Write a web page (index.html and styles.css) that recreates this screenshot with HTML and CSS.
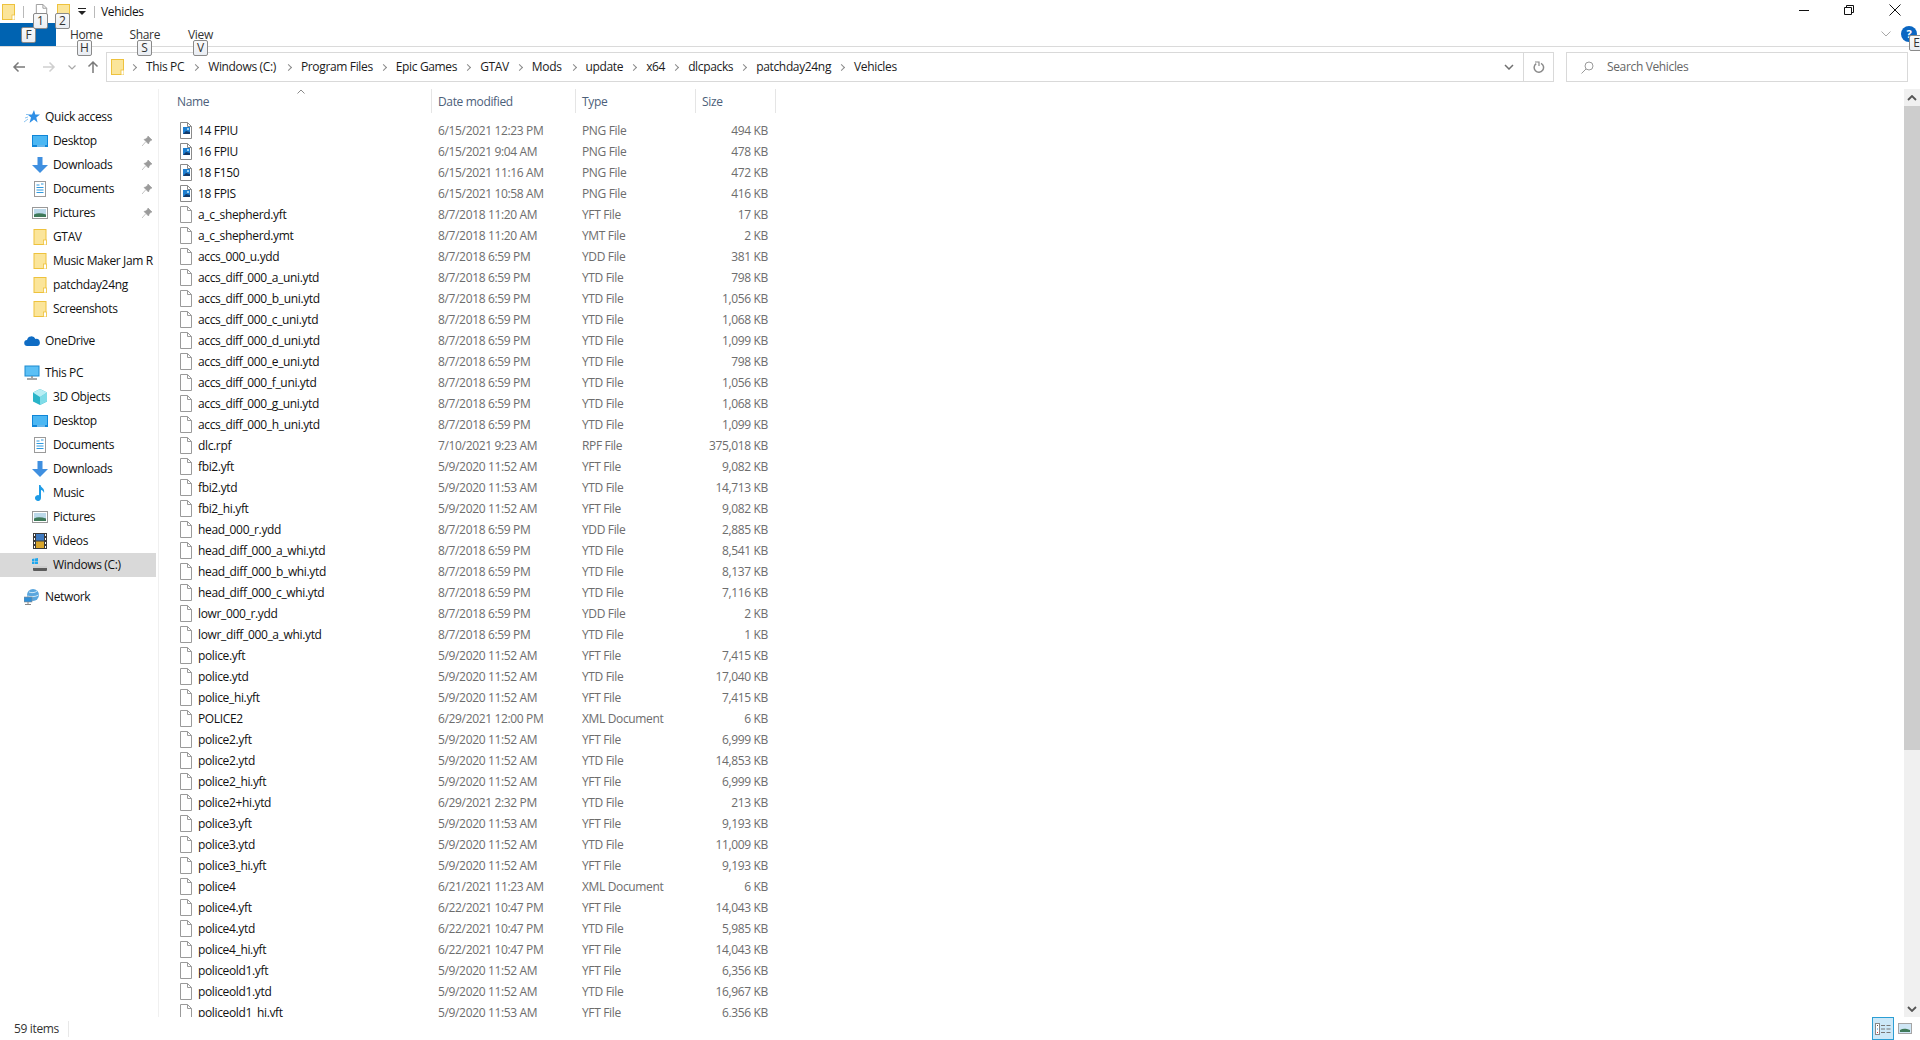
FILE: index.html
```html
<!DOCTYPE html>
<html lang="en">
<head>
<meta charset="utf-8">
<title>Vehicles</title>
<link rel="stylesheet" href="styles.css">
</head>
<body>
<svg class="defs" xmlns="http://www.w3.org/2000/svg">
  <symbol id="doc" viewBox="0 0 12 17"><path d="M.5.5h7l4 4v12H.5z" fill="#fff" stroke="#9a9a9a"/><path d="M7.500.5v4h4" fill="none" stroke="#9a9a9a"/></symbol>
  <symbol id="img" viewBox="0 0 12 17"><path d="M.5.5h7l4 4v12H.5z" fill="#fff" stroke="#8a8a8a"/><path d="M7.500.5v4h4" fill="none" stroke="#8a8a8a"/><rect x="3" y="5" width="7" height="7" fill="#1f7fd0"/><path d="M3 12l3-3 4 1v2z" fill="#123a6b"/><rect x="7" y="6" width="2" height="2" fill="#9ed4f5"/></symbol>
  <symbol id="folder" viewBox="0 0 13 16"><rect x=".5" y=".5" width="12" height="15" fill="#fbe59a" stroke="#eec23d"/><rect x="10" y="11" width="3" height="5" fill="#fff" stroke="#eec23d" stroke-width=".8"/></symbol>
  <symbol id="desktop" viewBox="0 0 16 12"><rect width="16" height="12" fill="#0f86d8"/><rect x="1" y="1" width="14" height="9" fill="#4cb7f3"/><rect x="5" y="10.5" width="8" height="1" fill="#bfe6fb"/></symbol>
  <symbol id="down" viewBox="0 0 16 16"><path d="M5.5 0h5v8H16l-8 8-8-8h5.500z" fill="#3f8fe0"/></symbol>
  <symbol id="docs" viewBox="0 0 12 16"><rect x=".5" y=".5" width="11" height="15" fill="#fff" stroke="#9a9a9a"/><path d="M2.500 4h3M7 3h2.500M2.500 6.500h7M2.500 9h7M2.500 11.500h7" stroke="#2f9ae0"/></symbol>
  <symbol id="pics" viewBox="0 0 16 12"><rect x=".5" y=".5" width="15" height="11" fill="#fff" stroke="#999"/><rect x="2" y="2" width="12" height="8" fill="#bcd9ea"/><path d="M2 7.500c4-2 8-1 12 0V10H2z" fill="#3f7a5a"/></symbol>
  <symbol id="pin" viewBox="0 0 10 10"><path d="M6 0l4 4-1.500.5L7 6.500 6.500 8 2 3.500 3.500 3 5.500 1.500zM3.500 6L0 10" fill="#9b9b9b" stroke="#9b9b9b" stroke-width=".6"/></symbol>
</svg>

<div class="window">
  <header class="titlebar">
    <svg class="ico16 t-folder"><use href="#folder"/></svg>
    <i class="t-sep"></i>
    <svg class="ico16 t-doc"><use href="#doc"/></svg>
    <svg class="ico16 t-fold2"><use href="#folder"/></svg>
    <svg class="t-drop" viewBox="0 0 8 7" width="8" height="7"><path d="M0 0h8v1H0zM0 3h8L4 7z" fill="#222"/></svg>
    <i class="t-sep t-sep2"></i>
    <span class="t-title">Vehicles</span>
    <div class="winbtns">
      <svg viewBox="0 0 10 10" width="10" height="10"><path d="M0 5.500h10" stroke="#111"/></svg>
      <svg viewBox="0 0 10 10" width="10" height="10"><path d="M.5 2.500h7v7h-7zM2.500 2.500v-2h7v7h-2" fill="none" stroke="#111"/></svg>
      <svg viewBox="0 0 12 12" width="12" height="12"><path d="M.5.500l11 11M11.500.500l-11 11" stroke="#111"/></svg>
    </div>
  </header>

  <nav class="tabs">
    <span class="tab-file"></span>
    <span class="tab tab-home">Home</span>
    <span class="tab tab-share">Share</span>
    <span class="tab tab-view">View</span>
    <div class="tab-right">
      <svg viewBox="0 0 10 6" width="10" height="6"><path d="M.5.500L5 5 9.500.500" fill="none" stroke="#a8a8a8"/></svg>
      <span class="help">?</span>
    </div>
  </nav>

  <div class="navbar">
    <div class="navbtns">
      <svg viewBox="0 0 14 12" width="14" height="12"><path d="M13 6H2M6.500 1.500L2 6l4.500 4.500" fill="none" stroke="#7a7a7a" stroke-width="1.500"/></svg>
      <svg viewBox="0 0 14 12" width="14" height="12"><path d="M1 6h11M7.500 1.500L12 6l-4.500 4.500" fill="none" stroke="#cfcfcf" stroke-width="1.500"/></svg>
      <svg viewBox="0 0 8 5" width="8" height="5"><path d="M.5.500L4 4 7.500.500" fill="none" stroke="#a8a8a8" stroke-width="1.200"/></svg>
      <svg viewBox="0 0 12 14" width="12" height="14"><path d="M6 13V2M1.500 6.500L6 2l4.500 4.500" fill="none" stroke="#7a7a7a" stroke-width="1.500"/></svg>
    </div>
    <div class="address">
      <svg class="ico16 a-folder"><use href="#folder"/></svg>
      <span class="crumb crumb-a">This PC</span>
      <span class="crumb crumb-b">Windows (C:)</span>
      <span class="crumb">Program Files</span>
      <span class="crumb">Epic Games</span>
      <span class="crumb">GTAV</span>
      <span class="crumb crumb-a">Mods</span>
      <span class="crumb">update</span>
      <span class="crumb">x64</span>
      <span class="crumb">dlcpacks</span>
      <span class="crumb">patchday24ng</span>
      <span class="crumb">Vehicles</span>
      <div class="a-right">
        <svg viewBox="0 0 10 6" width="10" height="6"><path d="M1 1l4 4 4-4" fill="none" stroke="#707070" stroke-width="1.500"/></svg>
        <span class="refresh"><svg viewBox="0 0 12 12" width="12" height="12"><path d="M3.200 2.600A4.700 4.700 0 1 0 8 2.300" fill="none" stroke="#8a8a8a" stroke-width="1.500"/><path d="M2 1h4v4" fill="none" stroke="#8a8a8a" stroke-width="1.200"/></svg></span>
      </div>
    </div>
    <div class="search">
      <svg viewBox="0 0 13 13" width="13" height="13"><circle cx="8" cy="5" r="4" fill="none" stroke="#9a9a9a"/><path d="M5 8l-4.500 4.500" stroke="#9a9a9a"/></svg>
      <span>Search Vehicles</span>
    </div>
  </div>

  <main class="main">
    <aside class="sidebar">
      <div class="s-item s-top"><svg class="s-ico" viewBox="0 0 16 16"><path d="M10 1l1.300 4.500H16l-3.700 3 1.300 5L10 10.500 5.500 14 7 8.500 3.500 5.500H8z" fill="#2f8fe6"/><path d="M0 13l4-3M1 9l3-1M2 5.500h2" stroke="#8cc4f0" fill="none"/></svg>Quick access</div>
      <div class="s-item s-sub"><svg class="s-ico"><use href="#desktop"/></svg>Desktop<svg class="pin"><use href="#pin"/></svg></div>
      <div class="s-item s-sub"><svg class="s-ico"><use href="#down"/></svg>Downloads<svg class="pin"><use href="#pin"/></svg></div>
      <div class="s-item s-sub"><svg class="s-ico"><use href="#docs"/></svg>Documents<svg class="pin"><use href="#pin"/></svg></div>
      <div class="s-item s-sub"><svg class="s-ico"><use href="#pics"/></svg>Pictures<svg class="pin"><use href="#pin"/></svg></div>
      <div class="s-item s-sub"><svg class="s-ico"><use href="#folder"/></svg>GTAV</div>
      <div class="s-item s-sub"><svg class="s-ico"><use href="#folder"/></svg>Music Maker Jam R</div>
      <div class="s-item s-sub"><svg class="s-ico"><use href="#folder"/></svg>patchday24ng</div>
      <div class="s-item s-sub"><svg class="s-ico"><use href="#folder"/></svg>Screenshots</div>
      <div class="s-item s-top s-gap"><svg class="s-ico" viewBox="0 0 16 10"><path d="M3.500 10a3 3 0 0 1-.5-6 4.500 4.500 0 0 1 8.500-1A3.500 3.500 0 0 1 13 10z" fill="#0f6cc4"/></svg>OneDrive</div>
      <div class="s-item s-top s-gap"><svg class="s-ico" viewBox="0 0 16 14"><rect x="1" y="0" width="14" height="10" fill="#5cc0f5" stroke="#1a8ad0"/><path d="M8 10v2M3 13h10" stroke="#8a8a8a" stroke-width="1.500"/></svg>This PC</div>
      <div class="s-item s-sub"><svg class="s-ico" viewBox="0 0 16 16"><path d="M8 0l7 3.500v9L8 16l-7-3.500v-9z" fill="#29b4c8"/><path d="M8 8l7-4.500v9L8 16z" fill="#7fdce8"/><path d="M8 0l7 3.500L8 8 1 3.500z" fill="#b8eef4"/></svg>3D Objects</div>
      <div class="s-item s-sub"><svg class="s-ico"><use href="#desktop"/></svg>Desktop</div>
      <div class="s-item s-sub"><svg class="s-ico"><use href="#docs"/></svg>Documents</div>
      <div class="s-item s-sub"><svg class="s-ico"><use href="#down"/></svg>Downloads</div>
      <div class="s-item s-sub"><svg class="s-ico" viewBox="0 0 16 16"><path d="M7 0h1.500c.5 3 4.500 3 3.500 8-.5-2-2-3-3-3v8a3 3 0 1 1-2-2.800z" fill="#1e9be6"/></svg>Music</div>
      <div class="s-item s-sub"><svg class="s-ico"><use href="#pics"/></svg>Pictures</div>
      <div class="s-item s-sub"><svg class="s-ico" viewBox="0 0 14 16"><rect width="14" height="16" fill="#3a3a3a"/><rect x="3" y="1" width="8" height="6.500" fill="#3f7ac0"/><rect x="3" y="8.500" width="8" height="6.500" fill="#d9a52a"/><path d="M1 1h1v2H1zM1 5h1v2H1zM1 9h1v2H1zM1 13h1v2H1zM12 1h1v2h-1zM12 5h1v2h-1zM12 9h1v2h-1zM12 13h1v2h-1z" fill="#fff"/></svg>Videos</div>
      <div class="s-item s-sub s-sel"><svg class="s-ico" viewBox="0 0 16 14"><path d="M0 1l2.500-.5V3H0zM3 .4L6 0v3H3zM0 3.500h2.500V6H0zM3 3.500h3V6H3z" fill="#1ea7ee"/><rect x="1" y="8" width="14" height="5" rx="1" fill="#5c5c5c"/><rect x="1" y="8" width="14" height="2" fill="#cfcfcf"/></svg>Windows (C:)</div>
      <div class="s-item s-top s-gap"><svg class="s-ico" viewBox="0 0 16 16"><circle cx="9" cy="6" r="6" fill="#5aa6de"/><path d="M5 3c2 1 6 1 8-1M3.500 7c3 1 8 1 11-1" stroke="#cfe8f8" fill="none"/><rect x="0" y="8" width="8" height="5" fill="#2f8fd8" stroke="#8a8a8a" stroke-width=".6"/><path d="M4 13v2M1 15.500h6" stroke="#888"/></svg>Network</div>
    </aside>

    <section class="list">
      <div class="cols head">
        <span class="h-name">Name</span>
        <span>Date modified</span>
        <span>Type</span>
        <span>Size</span>
      </div>
      <div class="rows">
        <div class="cols row"><span class="n"><svg class="fi"><use href="#img"/></svg>14 FPIU</span><span>6/15/2021 12:23 PM</span><span>PNG File</span><span class="z">494 KB</span></div>
        <div class="cols row"><span class="n"><svg class="fi"><use href="#img"/></svg>16 FPIU</span><span>6/15/2021 9:04 AM</span><span>PNG File</span><span class="z">478 KB</span></div>
        <div class="cols row"><span class="n"><svg class="fi"><use href="#img"/></svg>18 F150</span><span>6/15/2021 11:16 AM</span><span>PNG File</span><span class="z">472 KB</span></div>
        <div class="cols row"><span class="n"><svg class="fi"><use href="#img"/></svg>18 FPIS</span><span>6/15/2021 10:58 AM</span><span>PNG File</span><span class="z">416 KB</span></div>
        <div class="cols row"><span class="n"><svg class="fi"><use href="#doc"/></svg>a_c_shepherd.yft</span><span>8/7/2018 11:20 AM</span><span>YFT File</span><span class="z">17 KB</span></div>
        <div class="cols row"><span class="n"><svg class="fi"><use href="#doc"/></svg>a_c_shepherd.ymt</span><span>8/7/2018 11:20 AM</span><span>YMT File</span><span class="z">2 KB</span></div>
        <div class="cols row"><span class="n"><svg class="fi"><use href="#doc"/></svg>accs_000_u.ydd</span><span>8/7/2018 6:59 PM</span><span>YDD File</span><span class="z">381 KB</span></div>
        <div class="cols row"><span class="n"><svg class="fi"><use href="#doc"/></svg>accs_diff_000_a_uni.ytd</span><span>8/7/2018 6:59 PM</span><span>YTD File</span><span class="z">798 KB</span></div>
        <div class="cols row"><span class="n"><svg class="fi"><use href="#doc"/></svg>accs_diff_000_b_uni.ytd</span><span>8/7/2018 6:59 PM</span><span>YTD File</span><span class="z">1,056 KB</span></div>
        <div class="cols row"><span class="n"><svg class="fi"><use href="#doc"/></svg>accs_diff_000_c_uni.ytd</span><span>8/7/2018 6:59 PM</span><span>YTD File</span><span class="z">1,068 KB</span></div>
        <div class="cols row"><span class="n"><svg class="fi"><use href="#doc"/></svg>accs_diff_000_d_uni.ytd</span><span>8/7/2018 6:59 PM</span><span>YTD File</span><span class="z">1,099 KB</span></div>
        <div class="cols row"><span class="n"><svg class="fi"><use href="#doc"/></svg>accs_diff_000_e_uni.ytd</span><span>8/7/2018 6:59 PM</span><span>YTD File</span><span class="z">798 KB</span></div>
        <div class="cols row"><span class="n"><svg class="fi"><use href="#doc"/></svg>accs_diff_000_f_uni.ytd</span><span>8/7/2018 6:59 PM</span><span>YTD File</span><span class="z">1,056 KB</span></div>
        <div class="cols row"><span class="n"><svg class="fi"><use href="#doc"/></svg>accs_diff_000_g_uni.ytd</span><span>8/7/2018 6:59 PM</span><span>YTD File</span><span class="z">1,068 KB</span></div>
        <div class="cols row"><span class="n"><svg class="fi"><use href="#doc"/></svg>accs_diff_000_h_uni.ytd</span><span>8/7/2018 6:59 PM</span><span>YTD File</span><span class="z">1,099 KB</span></div>
        <div class="cols row"><span class="n"><svg class="fi"><use href="#doc"/></svg>dlc.rpf</span><span>7/10/2021 9:23 AM</span><span>RPF File</span><span class="z">375,018 KB</span></div>
        <div class="cols row"><span class="n"><svg class="fi"><use href="#doc"/></svg>fbi2.yft</span><span>5/9/2020 11:52 AM</span><span>YFT File</span><span class="z">9,082 KB</span></div>
        <div class="cols row"><span class="n"><svg class="fi"><use href="#doc"/></svg>fbi2.ytd</span><span>5/9/2020 11:53 AM</span><span>YTD File</span><span class="z">14,713 KB</span></div>
        <div class="cols row"><span class="n"><svg class="fi"><use href="#doc"/></svg>fbi2_hi.yft</span><span>5/9/2020 11:52 AM</span><span>YFT File</span><span class="z">9,082 KB</span></div>
        <div class="cols row"><span class="n"><svg class="fi"><use href="#doc"/></svg>head_000_r.ydd</span><span>8/7/2018 6:59 PM</span><span>YDD File</span><span class="z">2,885 KB</span></div>
        <div class="cols row"><span class="n"><svg class="fi"><use href="#doc"/></svg>head_diff_000_a_whi.ytd</span><span>8/7/2018 6:59 PM</span><span>YTD File</span><span class="z">8,541 KB</span></div>
        <div class="cols row"><span class="n"><svg class="fi"><use href="#doc"/></svg>head_diff_000_b_whi.ytd</span><span>8/7/2018 6:59 PM</span><span>YTD File</span><span class="z">8,137 KB</span></div>
        <div class="cols row"><span class="n"><svg class="fi"><use href="#doc"/></svg>head_diff_000_c_whi.ytd</span><span>8/7/2018 6:59 PM</span><span>YTD File</span><span class="z">7,116 KB</span></div>
        <div class="cols row"><span class="n"><svg class="fi"><use href="#doc"/></svg>lowr_000_r.ydd</span><span>8/7/2018 6:59 PM</span><span>YDD File</span><span class="z">2 KB</span></div>
        <div class="cols row"><span class="n"><svg class="fi"><use href="#doc"/></svg>lowr_diff_000_a_whi.ytd</span><span>8/7/2018 6:59 PM</span><span>YTD File</span><span class="z">1 KB</span></div>
        <div class="cols row"><span class="n"><svg class="fi"><use href="#doc"/></svg>police.yft</span><span>5/9/2020 11:52 AM</span><span>YFT File</span><span class="z">7,415 KB</span></div>
        <div class="cols row"><span class="n"><svg class="fi"><use href="#doc"/></svg>police.ytd</span><span>5/9/2020 11:52 AM</span><span>YTD File</span><span class="z">17,040 KB</span></div>
        <div class="cols row"><span class="n"><svg class="fi"><use href="#doc"/></svg>police_hi.yft</span><span>5/9/2020 11:52 AM</span><span>YFT File</span><span class="z">7,415 KB</span></div>
        <div class="cols row"><span class="n"><svg class="fi"><use href="#doc"/></svg>POLICE2</span><span>6/29/2021 12:00 PM</span><span>XML Document</span><span class="z">6 KB</span></div>
        <div class="cols row"><span class="n"><svg class="fi"><use href="#doc"/></svg>police2.yft</span><span>5/9/2020 11:52 AM</span><span>YFT File</span><span class="z">6,999 KB</span></div>
        <div class="cols row"><span class="n"><svg class="fi"><use href="#doc"/></svg>police2.ytd</span><span>5/9/2020 11:52 AM</span><span>YTD File</span><span class="z">14,853 KB</span></div>
        <div class="cols row"><span class="n"><svg class="fi"><use href="#doc"/></svg>police2_hi.yft</span><span>5/9/2020 11:52 AM</span><span>YFT File</span><span class="z">6,999 KB</span></div>
        <div class="cols row"><span class="n"><svg class="fi"><use href="#doc"/></svg>police2+hi.ytd</span><span>6/29/2021 2:32 PM</span><span>YTD File</span><span class="z">213 KB</span></div>
        <div class="cols row"><span class="n"><svg class="fi"><use href="#doc"/></svg>police3.yft</span><span>5/9/2020 11:53 AM</span><span>YFT File</span><span class="z">9,193 KB</span></div>
        <div class="cols row"><span class="n"><svg class="fi"><use href="#doc"/></svg>police3.ytd</span><span>5/9/2020 11:52 AM</span><span>YTD File</span><span class="z">11,009 KB</span></div>
        <div class="cols row"><span class="n"><svg class="fi"><use href="#doc"/></svg>police3_hi.yft</span><span>5/9/2020 11:52 AM</span><span>YFT File</span><span class="z">9,193 KB</span></div>
        <div class="cols row"><span class="n"><svg class="fi"><use href="#doc"/></svg>police4</span><span>6/21/2021 11:23 AM</span><span>XML Document</span><span class="z">6 KB</span></div>
        <div class="cols row"><span class="n"><svg class="fi"><use href="#doc"/></svg>police4.yft</span><span>6/22/2021 10:47 PM</span><span>YFT File</span><span class="z">14,043 KB</span></div>
        <div class="cols row"><span class="n"><svg class="fi"><use href="#doc"/></svg>police4.ytd</span><span>6/22/2021 10:47 PM</span><span>YTD File</span><span class="z">5,985 KB</span></div>
        <div class="cols row"><span class="n"><svg class="fi"><use href="#doc"/></svg>police4_hi.yft</span><span>6/22/2021 10:47 PM</span><span>YFT File</span><span class="z">14,043 KB</span></div>
        <div class="cols row"><span class="n"><svg class="fi"><use href="#doc"/></svg>policeold1.yft</span><span>5/9/2020 11:52 AM</span><span>YFT File</span><span class="z">6,356 KB</span></div>
        <div class="cols row"><span class="n"><svg class="fi"><use href="#doc"/></svg>policeold1.ytd</span><span>5/9/2020 11:52 AM</span><span>YTD File</span><span class="z">16,967 KB</span></div>
        <div class="cols row"><span class="n"><svg class="fi"><use href="#doc"/></svg>policeold1_hi.yft</span><span>5/9/2020 11:53 AM</span><span>YFT File</span><span class="z">6,356 KB</span></div>
      </div>
      <svg class="sort" viewBox="0 0 8 5" width="8" height="5"><path d="M.5 4.500L4 1l3.500 3.500" fill="none" stroke="#8a8a8a"/></svg>
    </section>

    <div class="scrollbar">
      <svg viewBox="0 0 10 6" width="10" height="6"><path d="M1 5l4-4 4 4" fill="none" stroke="#555" stroke-width="1.800"/></svg>
      <div class="thumb"></div>
      <svg class="sb-down" viewBox="0 0 10 6" width="10" height="6"><path d="M1 1l4 4 4-4" fill="none" stroke="#555" stroke-width="1.800"/></svg>
    </div>
  </main>

  <footer class="status">
    <span class="count">59 items</span>
    <div class="views">
      <span class="v-on"><svg viewBox="0 0 16 12" width="16" height="12"><rect x=".5" y=".5" width="4" height="11" fill="#fff" stroke="#888"/><path d="M2 2h1v1H2z" fill="#555"/><path d="M2 5.500h1v1H2z" fill="#2f8fe6"/><path d="M2 9h1v1H2z" fill="#d33"/><path d="M6 2.500h4M11.500 2.500h4M6 6h4M11.500 6h4M6 9.500h4M11.500 9.500h4" stroke="#777"/></svg></span>
      <span class="v-off"><svg viewBox="0 0 14 11" width="14" height="11"><rect x=".5" y=".5" width="13" height="10" fill="#cfe6f5" stroke="#a5a5a5"/><path d="M2 7c3-2 6-1.500 10 0v2H2z" fill="#3f7a5a"/></svg></span>
    </div>
  </footer>

  <span class="tip tip-f">F</span>
  <span class="tip tip-1">1</span>
  <span class="tip tip-2">2</span>
  <span class="tip tip-h">H</span>
  <span class="tip tip-s">S</span>
  <span class="tip tip-v">V</span>
  <span class="tip tip-e">E</span>
</div>
</body>
</html>
```
FILE: styles.css
```css
* { box-sizing: border-box; }
html, body { margin: 0; height: 100%; background: #fff; overflow: hidden; }
body { font: 12px/16px "Open Sans", "Noto Sans", sans-serif; letter-spacing: -0.35px; color: #111; }
.defs { display: none; }
svg { display: block; flex: none; }

.window { position: relative; display: flex; flex-direction: column; width: 1920px; height: 1040px; overflow: hidden; }

/* title bar */
.titlebar { display: flex; align-items: center; height: 23px; padding-left: 2px; flex: none; }
.ico16 { width: 13px; height: 16px; }
.t-sep { width: 1px; height: 12px; background: #b9b9b9; margin-left: 8px; }
.t-doc { margin-left: 11px; }
.t-fold2 { margin-left: 9px; }
.t-drop { margin-left: 8px; }
.t-sep2 { margin-left: 8px; }
.t-title { margin-left: 6px; }
.winbtns { margin-left: auto; margin-top: -3px; display: flex; align-items: center; gap: 35px; padding-right: 19px; }

/* ribbon tabs */
.tabs { display: flex; align-items: center; height: 24px; border-bottom: 1px solid #dadada; flex: none; }
.tab-file { width: 56px; height: 23px; background: #0063b1; }
.tab { color: #333; padding-top: 1px; }
.tab-home { margin-left: 14px; }
.tab-share { margin-left: 27px; }
.tab-view { margin-left: 28px; }
.tab-right { margin-left: auto; display: flex; align-items: center; gap: 10px; padding-right: 3px; margin-top: -2px; }
.help { width: 16px; height: 16px; border-radius: 50%; background: #0a66c2; color: #fff; font-weight: 700; font-size: 11px; line-height: 16px; text-align: center; }

/* navigation bar */
.navbar { display: flex; align-items: flex-start; height: 42px; padding-top: 5px; flex: none; }
.navbtns { display: flex; align-items: center; width: 106px; height: 30px; padding-left: 12px; gap: 16px; }
.navbtns svg:nth-child(3) { margin-left: -4px; }
.navbtns svg:nth-child(4) { margin-left: -5px; }
.address { display: flex; align-items: center; width: 1448px; height: 30px; border: 1px solid #d9d9d9; padding-left: 4px; }
.a-folder { margin-right: 2px; }
.crumb { display: flex; align-items: center; color: #1c1c1c; padding-left: 12px; padding-right: 3px; }
.crumb-a { padding-right: 4px; }
.crumb-b { padding-right: 5px; }
.crumb::before { content: ""; width: 4px; height: 4px; border-top: 1.5px solid #8a8a8a; border-right: 1.5px solid #8a8a8a; transform: rotate(45deg); margin-right: 10px; margin-left: -7px; }
.a-right { margin-left: auto; display: flex; align-items: center; height: 100%; }
.a-right > svg { margin-right: 9px; }
.refresh { display: flex; align-items: center; justify-content: center; width: 30px; height: 100%; border-left: 1px solid #d9d9d9; }
.search { display: flex; align-items: center; gap: 13px; width: 342px; height: 30px; margin-left: 12px; border: 1px solid #d9d9d9; padding-left: 14px; color: #666; }

/* main */
.main { display: flex; flex: 1; min-height: 0; }
.sidebar { width: 159px; flex: none; border-right: 1px solid #f0f0f0; padding-top: 16px; overflow: hidden; }
.s-item { display: flex; align-items: center; height: 24px; white-space: nowrap; width: 156px; overflow: hidden; color: #111; }
.s-top { padding-left: 24px; }
.s-sub { padding-left: 32px; }
.s-gap { margin-top: 8px; }
.s-ico { width: 16px; height: 16px; margin-right: 5px; }
.s-sel { background: #d9d9d9; }
.pin { width: 10px; height: 10px; margin-left: auto; margin-right: 4px; }

.list { position: relative; flex: 1; min-width: 0; overflow: hidden; }
.cols { display: grid; grid-template-columns: 273px 144px 120px 80px; white-space: nowrap; }
.head { height: 24px; align-items: stretch; color: #4c607a; }
.head span { display: flex; align-items: center; padding-left: 6px; padding-top: 2px; border-right: 1px solid #e5e5e5; }
.head span.h-name { padding-left: 18px; }
.rows { padding-top: 7px; }
.row { height: 21px; align-items: center; color: #6d6d6d; }
.row > span { padding-left: 6px; }
.row > span.n { display: flex; align-items: center; padding-left: 21px; color: #111; }
.row > span.z { padding-left: 0; padding-right: 8px; text-align: right; }
.fi { width: 12px; height: 17px; margin-right: 6px; }
.sort { position: absolute; left: 138px; top: 0; }

.scrollbar { display: flex; flex-direction: column; align-items: center; width: 16px; flex: none; background: #f0f0f0; padding-top: 6px; }
.thumb { width: 100%; height: 644px; margin-top: 5px; background: #cdcdcd; }
.sb-down { margin-top: auto; margin-bottom: 5px; }

/* status */
.status { display: flex; align-items: center; height: 23px; flex: none; }
.count { width: 69px; height: 16px; padding-left: 14px; border-right: 1px solid #e8e8e8; color: #333; }
.views { margin-left: auto; display: flex; align-items: center; gap: 4px; padding-right: 8px; }
.v-on { display: flex; align-items: center; justify-content: center; width: 22px; height: 23px; background: #cce8f8; border: 1px solid #2b9ed4; }
.v-off { display: flex; align-items: center; }

/* key tips overlay */
.tip { position: absolute; width: 15px; height: 16px; background: linear-gradient(#fafafa, #e9edf3); border: 1px solid #8a8a8a; border-radius: 2px; color: #333; font-size: 12px; line-height: 14px; text-align: center; letter-spacing: 0; }
.tip-f { left: 21px; top: 27px; }
.tip-1 { left: 33px; top: 13px; }
.tip-2 { left: 55px; top: 13px; }
.tip-h { left: 77px; top: 40px; }
.tip-s { left: 137px; top: 40px; }
.tip-v { left: 193px; top: 40px; }
.tip-e { left: 1909px; top: 35px; }
```
